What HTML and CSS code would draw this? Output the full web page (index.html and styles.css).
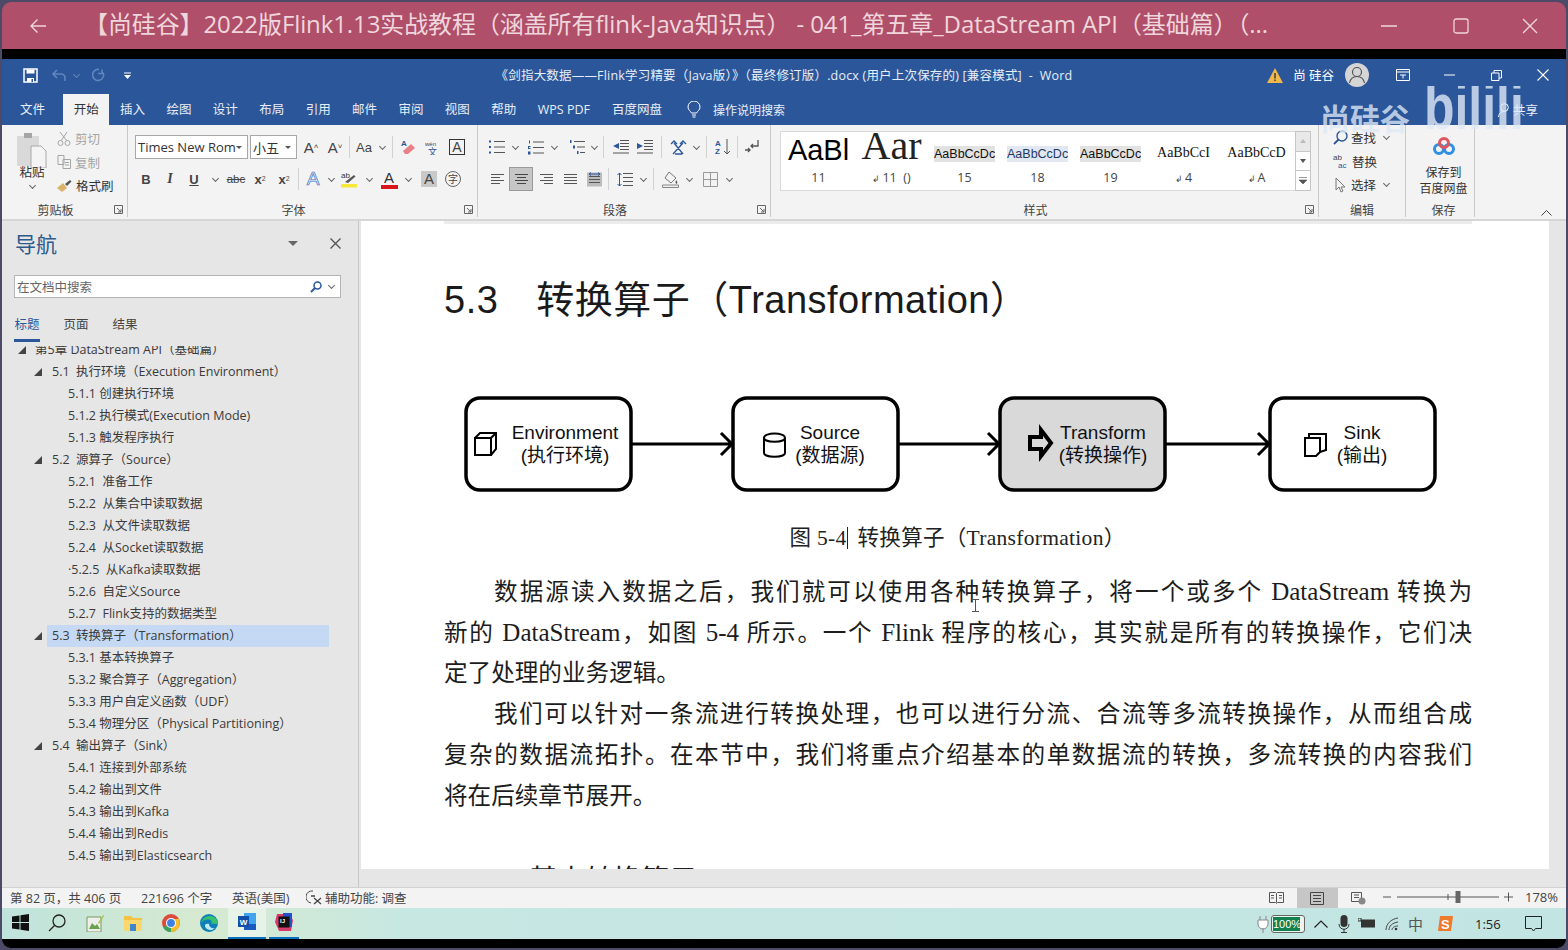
FILE: index.html
```html
<!DOCTYPE html>
<html lang="zh-CN">

<head>
    <meta charset="UTF-8">
    <title>Word - Flink</title>
    <link rel="stylesheet" href="styles.css">
</head>

<body>
    <svg class="defs" width="0" height="0">
        <symbol id="launcher" viewBox="0 0 9 9"><path d="M.5.5h8v8h-8zM3 3l4 4M7 4v3H4" fill="none" stroke="#666"/></symbol>
    </svg>

    <div class="window">
        <!-- video player title -->
        <div class="player-bar">
            <svg class="back" width="18" height="16" viewBox="0 0 18 16"><path d="M17 8H2M8.500 1.500 2 8l6.500 6.500" fill="none" stroke="#efd6dc" stroke-width="1.400"/></svg>
            <div class="player-title">【尚硅谷】2022版Flink1.13实战教程（涵盖所有flink-Java知识点） - 041_第五章_DataStream API（基础篇）（...</div>
            <svg class="player-btn" width="16" height="16" viewBox="0 0 16 16"><path d="M0 8h16" stroke="#efd6dc" stroke-width="1.300"/></svg>
            <svg class="player-btn" width="16" height="16" viewBox="0 0 16 16"><rect x="1" y="1" width="14" height="14" rx="2" fill="none" stroke="#efd6dc" stroke-width="1.300"/></svg>
            <svg class="player-btn player-close" width="16" height="16" viewBox="0 0 16 16"><path d="M1 1l14 14M15 1 1 15" stroke="#efd6dc" stroke-width="1.300"/></svg>
        </div>
        <div class="black-strip"></div>

        <!-- word title -->
        <div class="word-bar">
            <div class="qat">
                <svg class="qat-save" width="15" height="15" viewBox="0 0 15 15"><path d="M1 1h13v13H1z" fill="none" stroke="#fff" stroke-width="1.500"/><path d="M3.500 1.500h8v4h-8zM4 10h7v4H4z" fill="#fff"/><path d="M8.500 11h1.500v3H8.500z" fill="#2b579a"/></svg>
                <svg class="qat-undo" width="15" height="13" viewBox="0 0 15 13"><path d="M5 1 1 5l4 4M1 5h8a4 4 0 0 1 4 4v3" fill="none" stroke="#5f86bd" stroke-width="1.600"/></svg>
                <span class="chev chev-dim"></span>
                <svg class="qat-redo" width="14" height="14" viewBox="0 0 14 14"><path d="M10 1.500v4h-4M11 4.500A5.500 5.500 0 1 1 7 1.500" fill="none" stroke="#5f86bd" stroke-width="1.600"/></svg>
                <svg class="qat-more" width="7" height="7" viewBox="0 0 7 7"><path d="M0 3h7L3.500 7z" fill="#fff"/><path d="M0 1h7" stroke="#fff"/></svg>
            </div>
            <div class="doc-title">《剑指大数据——Flink学习精要（Java版）》（最终修订版）.docx (用户上次保存的) [兼容模式]  -  Word</div>
            <div class="word-right">
                <svg width="16" height="15" viewBox="0 0 16 15"><path d="M8 0l8 15H0z" fill="#f2b84b"/><path d="M7.300 5h1.400v5.500H7.300zM7.300 11.500h1.400V13H7.300z" fill="#333"/></svg>
                <span class="user-name">尚 硅谷</span>
                <svg class="avatar" width="24" height="24" viewBox="0 0 24 24"><circle cx="12" cy="12" r="12" fill="#d5d5d5"/><circle cx="12" cy="9" r="4.500" fill="none" stroke="#555" stroke-width="1.200"/><path d="M4.500 20c1-5 4-6.500 7.500-6.500s6.500 1.500 7.500 6.500" fill="none" stroke="#555" stroke-width="1.200"/></svg>
                <span class="win-btn"><svg width="14" height="12" viewBox="0 0 14 12"><path d="M.5.500h13v11H.500zM.5 3h13M4 6h6M7 6v3.500" fill="none" stroke="#fff"/></svg></span>
                <span class="win-btn"><svg width="11" height="2" viewBox="0 0 11 2"><path d="M0 1h11" stroke="#fff"/></svg></span>
                <span class="win-btn"><svg width="11" height="11" viewBox="0 0 11 11"><path d="M.5 3h7.500v7.500H.5zM3 3V.5h7.500V8H8" fill="none" stroke="#fff"/></svg></span>
                <span class="win-btn"><svg width="12" height="12" viewBox="0 0 12 12"><path d="M.5.500l11 11M11.500.500l-11 11" stroke="#fff" stroke-width="1.100"/></svg></span>
            </div>
        </div>
        <div class="tab-bar">
            <span class="tab tab-file">文件</span>
            <span class="tab tab-on">开始</span>
            <span class="tab">插入</span>
            <span class="tab">绘图</span>
            <span class="tab">设计</span>
            <span class="tab">布局</span>
            <span class="tab">引用</span>
            <span class="tab">邮件</span>
            <span class="tab">审阅</span>
            <span class="tab">视图</span>
            <span class="tab">帮助</span>
            <span class="tab tab-wps">WPS PDF</span>
            <span class="tab tab-pan">百度网盘</span>
            <span class="tell-me">
                <svg width="14" height="17" viewBox="0 0 14 17"><path d="M4.500 12C3.500 10 1 9 1 6a6 6 0 0 1 12 0c0 3-2.500 4-3.500 6zM5 14h4M5.500 16h3" fill="none" stroke="#fff"/></svg>
                <span>操作说明搜索</span>
            </span>
            <span class="tab-share">
                <svg width="13" height="14" viewBox="0 0 13 14"><circle cx="6.500" cy="4.500" r="3.800" fill="none" stroke="#fff"/><path d="M.5 14c.5-4 3-5.500 6-5.500" fill="none" stroke="#fff"/></svg>
                <span>共享</span>
            </span>
        </div>

        <!-- ribbon -->
        <div class="ribbon">
            <div class="group group-clip">
                <div class="group-body clip-body">
                    <div class="paste">
                        <svg width="30" height="36" viewBox="0 0 30 36"><path d="M0 4h22v30H0z" fill="#d9d9d9"/><path d="M7 1h8v5H7z" fill="#a5a5a5"/><path d="M14 14h10l5 5v17H14z" fill="#f4f4f4" stroke="#a8a8a8"/></svg>
                        <span class="paste-label">粘贴</span>
                        <span class="chev"></span>
                    </div>
                    <div class="clip-list">
                        <div class="clip-item clip-off"><svg width="14" height="14" viewBox="0 0 14 14"><path d="M10 0 4 9M3 0l7 9" stroke="#a5a5a5" fill="none"/><circle cx="3.500" cy="11" r="2.500" fill="none" stroke="#a5a5a5"/><circle cx="10.500" cy="11" r="2.500" fill="none" stroke="#a5a5a5"/></svg>剪切</div>
                        <div class="clip-item clip-off"><svg width="14" height="14" viewBox="0 0 14 14"><path d="M1 .5h6v9H1zM6 4.500h7.500v9H6zM8 7.500h4M8 10h4" fill="#f3f3f3" stroke="#a5a5a5"/></svg>复制</div>
                        <div class="clip-item"><svg width="15" height="14" viewBox="0 0 15 14"><path d="M0 9l6-5 4 5-5 4z" fill="#d9b36a"/><path d="M8 5l5-4 1.500 1.500L10 7z" fill="#555"/></svg>格式刷</div>
                    </div>
                </div>
                <div class="group-label"><span>剪贴板</span><svg class="launch"><use href="#launcher"/></svg></div>
            </div>

            <div class="group group-font">
                <div class="group-body">
                    <div class="row font-row-1">
                        <span class="select select-font">Times New Rom<i class="caret"></i></span>
                        <span class="select select-size">小五<i class="caret"></i></span>
                        <span class="tool txt grow-a">A<sup>˄</sup></span>
                        <span class="tool txt grow-a">A<sup>˅</sup></span>
                        <span class="sep sep-tight"></span>
                        <span class="tool txt small-aa">Aa</span><span class="chev w12"></span>
                        <span class="sep"></span>
                        <span class="tool"><svg width="16" height="16" viewBox="0 0 16 16"><path d="M4 15l-2-3 8-7 4 4-7 6z" fill="#e8808c"/><text x="0" y="7" class="svg-a">A</text></svg></span>
                        <span class="tool"><svg width="16" height="16" viewBox="0 0 16 16"><text x="0" y="7" class="svg-tiny">wén</text><text x="3" y="16" class="svg-cn">文</text></svg></span>
                        <span class="tool"><span class="boxed-a">A</span></span>
                    </div>
                    <div class="row font-row-2">
                        <span class="tool txt t-b">B</span>
                        <span class="tool txt t-i">I</span>
                        <span class="tool txt t-u">U</span><span class="chev w18"></span>
                        <span class="tool txt t-s">abc</span>
                        <span class="tool txt t-sm">x<sub>2</sub></span>
                        <span class="tool txt t-sm">x<sup>2</sup></span>
                        <span class="sep sep-tight"></span>
                        <span class="tool txt t-fx">A</span><span class="chev w12"></span>
                        <span class="tool"><svg width="18" height="18" viewBox="0 0 18 18"><text x="1" y="8" class="svg-ab">ab</text><path d="M5 12 14 5l1.500 1.500L8 13z" fill="#555"/><path d="M1 14h16v3.500H1z" fill="#f7e83a"/></svg></span><span class="chev w16"></span>
                        <span class="tool"><span class="a-red">A</span></span><span class="chev w14"></span>
                        <span class="tool ml2"><span class="a-shade">A</span></span>
                        <span class="tool"><span class="a-circle">字</span></span>
                    </div>
                </div>
                <div class="group-label"><span>字体</span><svg class="launch"><use href="#launcher"/></svg></div>
            </div>

            <div class="group group-para">
                <div class="group-body">
                    <div class="row para-row">
                        <span class="tool"><svg width="16" height="14" viewBox="0 0 16 14"><path d="M5 1.500h11M5 7h11M5 12.500h11" stroke="#555"/><path d="M0 .5h2v2H0zM0 6h2v2H0zM0 11.500h2v2H0z" fill="#2b579a"/></svg></span><span class="chev w12"></span>
                        <span class="tool ml3"><svg width="16" height="15" viewBox="0 0 16 15"><path d="M5 2h11M5 7.500h11M5 13h11" stroke="#555"/><path d="M1 .5h1v3H1zM0 6h2.500v1H1v1h1.500v1H0zM0 11.500h2.500v3H0z" fill="#2b579a"/></svg></span><span class="chev w12"></span>
                        <span class="tool ml5"><svg width="16" height="15" viewBox="0 0 16 15"><path d="M5 1.500h11M8 7h8M11 12.500h5" stroke="#555"/><path d="M1 0h1.500v3H1zM4 5.500h2v3H4zM8 11h1.500v3H8z" fill="#2b579a"/></svg></span><span class="chev w10"></span>
                        <span class="sep"></span>
                        <span class="tool ml1"><svg width="16" height="14" viewBox="0 0 16 14"><path d="M7 .5h9M7 3.500h9M7 6.500h9M7 9.500h9M0 13h16" stroke="#555"/><path d="M6 3v6L0 6z" fill="#2b579a"/></svg></span>
                        <span class="tool"><svg width="16" height="14" viewBox="0 0 16 14"><path d="M7 .5h9M7 3.500h9M7 6.500h9M7 9.500h9M0 13h16" stroke="#555"/><path d="M0 3v6L6 6z" fill="#2b579a"/></svg></span>
                        <span class="sep"></span>
                        <span class="tool"><svg width="17" height="15" viewBox="0 0 17 15"><path d="M1 4 4 1l3 3M10 4l3-3 3 3M3 14 13 3M4 3l9 11M5 14h7" fill="none" stroke="#2b579a" stroke-width="1.300"/></svg></span><span class="chev w12"></span>
                        <span class="sep"></span>
                        <span class="tool"><svg width="16" height="16" viewBox="0 0 16 16"><text x="0" y="7" class="svg-az">A</text><text x="0" y="15" class="svg-az">Z</text><path d="M12 0v15M9 12l3 3 3-3" fill="none" stroke="#555"/></svg></span>
                        <span class="sep sep-tight"></span>
                        <span class="tool"><svg width="16" height="15" viewBox="0 0 16 15"><path d="M14 0v6H7M9 4 7 6l2 2M1 10h5M4 8l2 2-2 2" fill="none" stroke="#555" stroke-width="1.300"/></svg></span>
                    </div>
                    <div class="row para-row">
                        <span class="tool"><svg width="13" height="11" viewBox="0 0 13 11"><path d="M0 .5h13M0 3.500h9M0 6.500h13M0 9.500h9" stroke="#555"/></svg></span>
                        <span class="tool tool-on"><svg width="13" height="11" viewBox="0 0 13 11"><path d="M0 .5h13M2 3.500h9M0 6.500h13M2 9.500h9" stroke="#444"/></svg></span>
                        <span class="tool ml1"><svg width="13" height="11" viewBox="0 0 13 11"><path d="M0 .5h13M4 3.500h9M0 6.500h13M4 9.500h9" stroke="#555"/></svg></span>
                        <span class="tool"><svg width="13" height="11" viewBox="0 0 13 11"><path d="M0 .5h13M0 3.500h13M0 6.500h13M0 9.500h13" stroke="#555"/></svg></span>
                        <span class="tool"><svg width="15" height="15" viewBox="0 0 15 15"><path d="M0 .5h15v14H0z" fill="#bbb"/><path d="M2 4.500h11M2 7.500h11M2 10.500h11" stroke="#555"/><path d="M2 2h11M4 .5 2 2l2 1.500M11 .5 13 2l-2 1.500" fill="none" stroke="#2b579a"/></svg></span>
                        <span class="sep sep-tight"></span>
                        <span class="tool ml2"><svg width="16" height="15" viewBox="0 0 16 15"><path d="M6 1.500h10M6 5.500h10M6 9.500h10M6 13.500h10" stroke="#555"/><path d="M2.500 1v13M.5 3l2-2 2 2M.5 12l2 2 2-2" fill="none" stroke="#2b579a"/></svg></span><span class="chev w12"></span>
                        <span class="sep"></span>
                        <span class="tool"><svg width="17" height="17" viewBox="0 0 17 17"><path d="M7 1l7 6-5 5-6-5z" fill="#f3f3f3" stroke="#777"/><path d="M14 9c1 1.500 2 2.500 1 3.500s-2-1-1-3.500z" fill="#555"/><path d="M.5 14h16v2.500H.5z" fill="#eee" stroke="#888"/></svg></span><span class="chev w14"></span>
                        <span class="tool ml2"><svg width="15" height="15" viewBox="0 0 15 15"><path d="M.5.500h14v14H.500zM7.500.5v14M.5 7.500h14" fill="none" stroke="#999"/></svg></span><span class="chev w14"></span>
                    </div>
                </div>
                <div class="group-label"><span>段落</span><svg class="launch"><use href="#launcher"/></svg></div>
            </div>

            <div class="group group-styles">
                <div class="group-body gallery-wrap">
                    <div class="gallery">
                        <div class="style-item"><div class="preview p-big">AaBl</div><div class="style-name">11</div></div>
                        <div class="style-item"><div class="preview p-big-serif">Aar</div><div class="style-name"><i class="ret">↲</i>11&nbsp; ()</div></div>
                        <div class="style-item"><div class="preview"><span class="p-chip">AaBbCcDc</span></div><div class="style-name">15</div></div>
                        <div class="style-item"><div class="preview"><span class="p-chip p-chip-blue">AaBbCcDc</span></div><div class="style-name">18</div></div>
                        <div class="style-item"><div class="preview"><span class="p-chip">AaBbCcDc</span></div><div class="style-name">19</div></div>
                        <div class="style-item"><div class="preview"><span class="p-serif">AaBbCcI</span></div><div class="style-name"><i class="ret">↲</i>4</div></div>
                        <div class="style-item"><div class="preview"><span class="p-serif">AaBbCcD</span></div><div class="style-name"><i class="ret">↲</i>A</div></div>
                    </div>
                    <div class="scroller">
                        <span class="scroll-cell scroll-off"><svg width="6" height="4" viewBox="0 0 6 4"><path d="M0 4l3-4 3 4z" fill="#bbb"/></svg></span>
                        <span class="scroll-cell"><svg width="6" height="4" viewBox="0 0 6 4"><path d="M0 0l3 4 3-4z" fill="#555"/></svg></span>
                        <span class="scroll-cell"><svg width="8" height="7" viewBox="0 0 8 7"><path d="M0 .5h8M0 3l4 4 4-4z" fill="#555" stroke="#555" stroke-width=".6"/></svg></span>
                    </div>
                </div>
                <div class="group-label"><span>样式</span><svg class="launch"><use href="#launcher"/></svg></div>
            </div>

            <div class="group group-edit">
                <div class="group-body edit-list">
                    <div class="edit-item"><svg width="15" height="15" viewBox="0 0 15 15"><circle cx="9" cy="6" r="5" fill="none" stroke="#2b579a" stroke-width="1.400"/><path d="M5.500 9.500 1 14" stroke="#2b579a" stroke-width="1.800"/></svg><span>查找</span><span class="chev w12"></span></div>
                    <div class="edit-item"><svg width="16" height="15" viewBox="0 0 16 15"><text x="0" y="6" class="svg-abc">ab</text><text x="5" y="14" class="svg-abc svg-abc-blue">ac</text></svg><span>替换</span></div>
                    <div class="edit-item"><svg width="15" height="16" viewBox="0 0 15 16"><path d="M3 1v12l3-3 2 5 2-1-2-4h4z" fill="#f3f3f3" stroke="#777"/></svg><span>选择</span><span class="chev w12"></span></div>
                </div>
                <div class="group-label group-label-center"><span>编辑</span></div>
            </div>

            <div class="group group-save">
                <div class="group-body save-body">
                    <svg width="22" height="19" viewBox="0 0 22 19"><circle cx="6" cy="12" r="4.500" fill="none" stroke="#2f8fe0" stroke-width="3"/><circle cx="16" cy="12" r="4.500" fill="none" stroke="#2f8fe0" stroke-width="3"/><circle cx="11" cy="6" r="4.500" fill="none" stroke="#e0565f" stroke-width="3"/></svg>
                    <span class="save-text">保存到<br>百度网盘</span>
                </div>
                <div class="group-label group-label-center"><span>保存</span></div>
            </div>

            <div class="collapse-cell">
                <svg width="11" height="6" viewBox="0 0 11 6"><path d="M.5 5.500l5-5 5 5" fill="none" stroke="#444"/></svg>
            </div>
        </div>
        <div class="ribbon-line"></div>

        <!-- uploader watermark, sits over the tabs -->
        <div class="watermark"><span class="wm-cn">尚硅谷</span><span class="wm-logo">bilili</span></div>

        <div class="main">
            <aside class="nav">
                <div class="nav-head">
                    <span class="nav-title">导航</span>
                    <span class="nav-drop"></span>
                    <svg width="11" height="11" viewBox="0 0 11 11"><path d="M.5.500l10 10M10.500.500l-10 10" stroke="#555" stroke-width="1.400"/></svg>
                </div>
                <div class="nav-search">
                    <span class="nav-search-text">在文档中搜索</span>
                    <svg width="12" height="12" viewBox="0 0 12 12"><circle cx="7.500" cy="4.500" r="3.500" fill="none" stroke="#2b579a" stroke-width="1.500"/><path d="M5 7 1 11" stroke="#2b579a" stroke-width="2"/></svg>
                    <span class="chev w18"></span>
                </div>
                <div class="nav-tabs">
                    <span class="nav-tab nav-tab-on">标题</span>
                    <span class="nav-tab">页面</span>
                    <span class="nav-tab">结果</span>
                </div>
                <div class="tree">
                    <div class="node lv1"><i class="tri"></i><span>第5章 DataStream API（基础篇）</span></div>
                    <div class="node lv2"><i class="tri"></i><span>5.1&nbsp; 执行环境（Execution Environment）</span></div>
                    <div class="node lv3"><span>5.1.1 创建执行环境</span></div>
                    <div class="node lv3"><span>5.1.2 执行模式(Execution Mode)</span></div>
                    <div class="node lv3"><span>5.1.3 触发程序执行</span></div>
                    <div class="node lv2"><i class="tri"></i><span>5.2&nbsp; 源算子（Source）</span></div>
                    <div class="node lv3"><span>5.2.1&nbsp; 准备工作</span></div>
                    <div class="node lv3"><span>5.2.2&nbsp; 从集合中读取数据</span></div>
                    <div class="node lv3"><span>5.2.3&nbsp; 从文件读取数据</span></div>
                    <div class="node lv3"><span>5.2.4&nbsp; 从Socket读取数据</span></div>
                    <div class="node lv3"><span>·5.2.5&nbsp; 从Kafka读取数据</span></div>
                    <div class="node lv3"><span>5.2.6&nbsp; 自定义Source</span></div>
                    <div class="node lv3"><span>5.2.7&nbsp; Flink支持的数据类型</span></div>
                    <div class="node lv2 node-on"><i class="tri"></i><span>5.3&nbsp; 转换算子（Transformation）</span></div>
                    <div class="node lv3"><span>5.3.1 基本转换算子</span></div>
                    <div class="node lv3"><span>5.3.2 聚合算子（Aggregation）</span></div>
                    <div class="node lv3"><span>5.3.3 用户自定义函数（UDF）</span></div>
                    <div class="node lv3"><span>5.3.4 物理分区（Physical Partitioning）</span></div>
                    <div class="node lv2"><i class="tri"></i><span>5.4&nbsp; 输出算子（Sink）</span></div>
                    <div class="node lv3"><span>5.4.1 连接到外部系统</span></div>
                    <div class="node lv3"><span>5.4.2 输出到文件</span></div>
                    <div class="node lv3"><span>5.4.3 输出到Kafka</span></div>
                    <div class="node lv3"><span>5.4.4 输出到Redis</span></div>
                    <div class="node lv3"><span>5.4.5 输出到Elasticsearch</span></div>
                </div>
            </aside>

            <main class="doc">
                <div class="page">
                    <div class="page-top"></div>
                    <h1 class="h-section">5.3<span class="h-gap"></span>转换算子（Transformation）</h1>
                    <svg class="diagram" width="1000" height="130" viewBox="450 380 1000 130">
                        <g class="flow-box">
                            <rect x="467" y="398" width="165" height="92" rx="14"/>
                            <rect x="734" y="398" width="165" height="92" rx="14"/>
                            <rect class="flow-on" x="1001" y="398" width="165" height="92" rx="14"/>
                            <rect x="1271" y="398" width="165" height="92" rx="14"/>
                        </g>
                        <g class="flow-line">
                            <path d="M633 444h98M722 433l11 11-11 11"/>
                            <path d="M900 444h98M989 433l11 11-11 11"/>
                            <path d="M1167 444h101M1259 433l11 11-11 11"/>
                        </g>
                        <g class="flow-icon">
                            <path d="M476 438h16v17h-16zM476 438l5-5h16v16l-5 6M492 438l5-5"/>
                            <path d="M765 438c0-6 21-6 21 0v15c0 5-21 5-21 0zM765 438c0 5 21 5 21 0"/>
                            <path class="flow-thick" d="M1031 437h11v-7l10 13-10 13v-7h-11z"/>
                            <path d="M1306 438h15v14l-4 4h-11zM1310 438v-4h17v16l-6 2"/>
                        </g>
                        <text class="flow-text" x="566" y="439">Environment</text>
                        <text class="flow-text" x="566" y="462">(执行环境)</text>
                        <text class="flow-text" x="831" y="439">Source</text>
                        <text class="flow-text" x="831" y="462">(数据源)</text>
                        <text class="flow-text" x="1104" y="439">Transform</text>
                        <text class="flow-text" x="1104" y="462">(转换操作)</text>
                        <text class="flow-text" x="1363" y="439">Sink</text>
                        <text class="flow-text" x="1363" y="462">(输出)</text>
                    </svg>
                    <p class="caption">图 5-4<span class="text-caret"></span>转换算子（Transformation）</p>
                    <div class="body-text">
                        <span class="line line-just line-first">数据源读入数据之后，我们就可以使用各种转换算子，将一个或多个 <span class="lat">DataStream</span> 转换为</span>
                        <span class="line line-just">新的 <span class="lat">DataStream</span>，如图 <span class="lat">5-4</span> 所示。一个 <span class="lat">Flink</span> 程序的核心，其实就是所有的转换操作，它们决</span>
                        <span class="line">定了处理的业务逻辑。</span>
                        <span class="line line-just line-first">我们可以针对一条流进行转换处理，也可以进行分流、合流等多流转换操作，从而组合成</span>
                        <span class="line line-just">复杂的数据流拓扑。在本节中，我们将重点介绍基本的单数据流的转换，多流转换的内容我们</span>
                        <span class="line">将在后续章节展开。</span>
                    </div>
                    <h2 class="h-sub">5.3.1<span class="h-gap-sub"></span>基本转换算子</h2>
                    <svg class="ibeam" width="7" height="13" viewBox="0 0 7 13"><path d="M0 .5h7M0 12.500h7M3.500.5v12" stroke="#555"/></svg>
                </div>
            </main>
        </div>

        <!-- status bar -->
        <div class="status">
            <span class="st-a">第 82 页，共 406 页</span>
            <span class="st-b">221696 个字</span>
            <span class="st-c">英语(美国)</span>
            <span class="st-d"><svg width="16" height="15" viewBox="0 0 16 15"><path d="M7 1A6 6 0 0 0 5 13" fill="none" stroke="#444"/><path d="M5 6h4M8 8l7 6M15 8l-7 6" stroke="#444" stroke-width="1.300"/></svg>辅助功能: 调查</span>
            <span class="st-views">
                <span class="view"><svg width="15" height="12" viewBox="0 0 15 12"><path d="M.5.500h6l1 1 1-1h6v10h-6l-1 1-1-1h-6zM7.500 1.500v9M2 3.500h3M2 6h3M10 3.500h3M10 6h3" fill="none" stroke="#555"/></svg></span>
                <span class="view view-on"><svg width="14" height="13" viewBox="0 0 14 13"><path d="M.5.500h13v12H.5zM3 3.500h8M3 6.500h8M3 9.500h8" fill="none" stroke="#444"/></svg></span>
                <span class="view"><svg width="15" height="13" viewBox="0 0 15 13"><path d="M.5.500h10v9H.5zM3 3h5M3 5.500h5" fill="none" stroke="#555"/><circle cx="11" cy="9" r="3.500" fill="#888"/></svg></span>
            </span>
            <svg class="zoom-bar" width="135" height="14" viewBox="0 0 135 14"><path d="M0 7h8M14 7h102M65 4v6M121 7h9M125.500 2.500v9" stroke="#555"/><path d="M72.500 1h5v12h-5z" fill="#666"/></svg>
            <span class="st-zoom">178%</span>
        </div>

        <!-- taskbar -->
        <div class="taskbar">
            <span class="task"><svg width="17" height="17" viewBox="0 0 17 17"><path d="M0 2.500 7.500 1.500v6.500H0zM8.500 1.300 17 0v8H8.500zM0 9h7.500v6.500L0 14.500zM8.500 9H17v8L8.500 15.700z" fill="#111"/></svg></span>
            <span class="task"><svg width="18" height="18" viewBox="0 0 18 18"><circle cx="11" cy="7" r="6" fill="none" stroke="#222" stroke-width="1.300"/><path d="M6.500 11.500 1 17" stroke="#222" stroke-width="1.300"/></svg></span>
            <span class="task"><svg width="18" height="18" viewBox="0 0 18 18"><path d="M1 3h14v15H1z" fill="#eee" stroke="#7a9a5a"/><path d="M3 15l3-6 3 3 2-2 3 5z" fill="#6ca34a"/><path d="M12 9l5-8 1 1-5 8z" fill="#a5c24a"/></svg></span>
            <span class="task"><svg width="18" height="16" viewBox="0 0 18 16"><path d="M0 1h7l2 2h9v3H0z" fill="#f5c242"/><path d="M0 5h18v11H0z" fill="#fbd76e"/><path d="M6 9h6v7H6z" fill="#3f87c9"/></svg></span>
            <span class="task"><svg width="18" height="18" viewBox="0 0 18 18"><circle cx="9" cy="9" r="9" fill="#dd4b3e"/><path d="M9 9 1.200 13.500A9 9 0 0 0 9 18c2 0 4-.7 5.500-2z" fill="#3da35a"/><path d="M9 5h7.900A9 9 0 0 1 9 18z" fill="#f6c02d"/><circle cx="9" cy="9" r="4.500" fill="#3f80e5" stroke="#fff" stroke-width="1.200"/></svg></span>
            <span class="task"><svg width="18" height="18" viewBox="0 0 18 18"><circle cx="9" cy="9" r="9" fill="#0f7fb8"/><path d="M18 10c0-5-4-8-8-8-5 0-8 3-9 7 2-3 5-4 8-3.500 3 .5 3 3 2 4l7 .5z" fill="#37c06f"/><path d="M9 10c0 3 3 5 6 4-2 2-5 3-8 1s-3-6 2-5z" fill="#bfe9f5"/></svg></span>
            <span class="task task-on"><svg width="18" height="17" viewBox="0 0 18 17"><path d="M6 0h12v17H6z" fill="#41a5ee"/><path d="M6 11h12v6H6z" fill="#185abd"/><path d="M0 3h11v11H0z" fill="#114fa8"/><text x="5.500" y="12" class="svg-w">W</text></svg></span>
            <span class="task task-run"><svg width="18" height="18" viewBox="0 0 18 18"><path d="M2 1h12l4 6-2 11H4L0 9z" fill="#d83a6b"/><path d="M8 0h9v14H8z" fill="#2450c8"/><path d="M3.500 3.500h11v11h-11z" fill="#111"/><text x="5" y="10" class="svg-ij">IJ</text></svg></span>
            <span class="tray">
                <svg width="12" height="18" viewBox="0 0 12 18"><path d="M1 5h10v4a5 5 0 0 1-10 0zM3 1v4M9 1v4M6 13v5" fill="#fff" stroke="#888"/></svg>
                <span class="battery"><span class="battery-fill">100%</span></span>
                <svg class="tray-caret" width="14" height="8" viewBox="0 0 14 8"><path d="M.5 7.500 7 1l6.500 6.500" fill="none" stroke="#222" stroke-width="1.200"/></svg>
                <svg class="tray-mic" width="12" height="18" viewBox="0 0 12 18"><rect x="2.500" width="7" height="12" rx="3.500" fill="#333"/><path d="M1 9c0 7 10 7 10 0M6 14v3M3 17.500h6" fill="none" stroke="#333"/></svg>
                <svg class="tray-bat" width="17" height="11" viewBox="0 0 17 11"><path d="M3 1.500h14v8H3z" fill="#333"/><path d="M0 0h3v3H0z" fill="none" stroke="#333"/></svg>
                <svg class="tray-wifi" width="14" height="14" viewBox="0 0 14 14"><path d="M1 13C1 7 6 2 13 1M4 13c0-4 3-7 9-8M7 13c0-2 2-4 6-4" fill="none" stroke="#444"/><circle cx="11" cy="12" r="1.300" fill="#333"/></svg>
                <span class="tray-ime">中</span>
                <svg class="tray-sogou" width="17" height="17" viewBox="0 0 17 17"><path d="M3 1h13l-2 15H1z" fill="#ee7a2e"/><text x="4" y="13.500" class="svg-s">S</text></svg>
                <span class="tray-clock">1:56</span>
                <svg class="tray-note" width="17" height="16" viewBox="0 0 17 16"><path d="M.5.500h16v12h-6L8.500 15l-2-2.500h-6z" fill="none" stroke="#222"/></svg>
            </span>
        </div>
        <div class="black-foot"></div>
    </div>
</body>

</html>
```

FILE: styles.css
```css
* {
    box-sizing: border-box;
}

html,
body {
    margin: 0;
    height: 950px;
    overflow: hidden;
}

body {
    background: #4c4a66;
    padding: 2px 2px 2px 2px;
    font-family: "Open Sans", "Noto Sans CJK SC", sans-serif;
    font-size: 12.5px;
    color: #333;
}

.defs {
    display: block;
    height: 0;
}

.window {
    position: relative;
    width: 1564px;
    height: 946px;
    border-radius: 9px;
    overflow: hidden;
    display: flex;
    flex-direction: column;
}

/* player bar */
.player-bar {
    height: 47px;
    background: #b04f69;
    color: #efd6dc;
    display: flex;
    align-items: center;
    flex: none;
}

.back {
    margin-left: 27px;
}

.player-title {
    font-size: 24px;
    line-height: 30px;
    margin: -4px 0 0 37px;
    width: 1241px;
    white-space: nowrap;
    letter-spacing: -0.1px;
}

.player-btn {
    margin-left: 56px;
}

.player-close {
    margin-left: 53px;
}

.black-strip {
    height: 10px;
    background: #000;
    flex: none;
}

/* word title */
.word-bar {
    height: 32px;
    background: #2b579a;
    display: grid;
    grid-template-columns: 1fr auto 1fr;
    align-items: center;
    color: #fff;
    flex: none;
}

.qat {
    display: flex;
    align-items: center;
}

.qat-save {
    margin-left: 21px;
}

.qat-undo {
    margin-left: 14px;
}

.qat-redo {
    margin-left: 13px;
}

.qat-more {
    margin-left: 18px;
}

.doc-title {
    margin-top: -2px;
    font-size: 12.5px;
    letter-spacing: 0.19px;
    white-space: pre;
    color: #e8eef7;
}

.word-right {
    display: flex;
    align-items: center;
    justify-content: flex-end;
}

.user-name {
    margin: -2px 0 0 10px;
    font-size: 12.5px;
}

.avatar {
    margin-left: 11px;
    margin-right: 11px;
}

.win-btn {
    width: 46.5px;
    display: flex;
    justify-content: center;
}

/* tabs */
.tab-bar {
    height: 34px;
    background: #2b579a;
    display: flex;
    align-items: flex-end;
    color: #e8eef7;
    flex: none;
}

.tab {
    width: 46.4px;
    height: 31px;
    line-height: 31px;
    text-align: center;
    flex: none;
}

.tab-file {
    width: 61px;
}

.tab-on {
    background: #f3f3f3;
    color: #333;
}

.tab-wps {
    width: 74px;
}

.tab-pan {
    width: 72px;
}

.tell-me {
    height: 31px;
    margin-left: 14px;
    display: flex;
    align-items: center;
    gap: 12px;
    font-size: 12px;
}

.tab-share {
    height: 31px;
    margin-left: auto;
    margin-right: 28px;
    display: flex;
    align-items: center;
    gap: 2px;
}

/* ribbon */
.ribbon {
    height: 94px;
    background: #f3f3f3;
    display: flex;
    flex: none;
}

.ribbon-line {
    height: 2px;
    background: #d6d6d6;
    flex: none;
}

.group {
    display: flex;
    flex-direction: column;
    border-right: 1px solid #c9c9c9;
    flex: none;
    margin-bottom: 2px;
}

.group-clip {
    width: 126px;
}

.group-font {
    width: 350px;
}

.group-para {
    width: 293px;
}

.group-styles {
    width: 548px;
}

.group-edit {
    width: 87px;
}

.group-save {
    width: 69px;
    padding-left: 7px;
}

.group-body {
    height: 76px;
    padding-top: 10px;
    flex: none;
}

.group-label {
    height: 15px;
    margin-top: 1px;
    display: flex;
    align-items: center;
    font-size: 12px;
    color: #444;
}

.group-label span {
    flex: 1;
    text-align: center;
}

.launch {
    width: 9px;
    height: 9px;
    margin: 0 4px 0 5px;
}

.row {
    height: 24px;
    display: flex;
    align-items: center;
}

.row + .row {
    margin-top: 8px;
}

.font-row-1 {
    padding-left: 7px;
}

.font-row-2 {
    padding-left: 6px;
}

.para-row {
    padding-left: 7px;
}

.tool {
    width: 24px;
    height: 22px;
    flex: none;
    display: flex;
    align-items: center;
    justify-content: center;
    color: #444;
}

.tool-on {
    background: #c6c6c6;
    border: 1px solid #9a9a9a;
    height: 24px;
}

.ml1 {
    margin-left: 1px;
}

.ml2 {
    margin-left: 2px;
}

.ml3 {
    margin-left: 3px;
}

.ml5 {
    margin-left: 5px;
}

.sep {
    width: 1px;
    height: 22px;
    margin: 0 4px;
    background: #d2d2d2;
    flex: none;
}

.sep-tight {
    margin: 0 2px;
}

.chev {
    display: inline-flex;
    align-items: center;
    justify-content: center;
    flex: none;
    height: 12px;
}

.chev::after {
    content: "";
    width: 4px;
    height: 4px;
    border-right: 1px solid #666;
    border-bottom: 1px solid #666;
    transform: translateY(-1px) rotate(45deg);
}

.chev-dim {
    margin-left: 7px;
}

.chev-dim::after {
    border-color: #5f86bd;
}

.w10 {
    width: 10px;
}

.w12 {
    width: 12px;
}

.w14 {
    width: 14px;
}

.w16 {
    width: 16px;
}

.w18 {
    width: 18px;
}

.select {
    height: 24px;
    background: #fff;
    border: 1px solid #a8a8a8;
    display: flex;
    align-items: center;
    padding-left: 2px;
    font-size: 13px;
    color: #333;
    white-space: nowrap;
    flex: none;
}

.select-font {
    width: 113px;
}

.select-size {
    width: 47px;
    margin: 0 2px;
}

.caret {
    margin-left: auto;
    margin-right: 5px;
    border-left: 3px solid transparent;
    border-right: 3px solid transparent;
    border-top: 3px solid #555;
}

.txt {
    font-family: "Liberation Sans", sans-serif;
}

.grow-a {
    font-size: 15px;
}

.grow-a sup {
    font-size: 8px;
    line-height: 0;
    color: #444;
}

.small-aa {
    font-size: 13px;
}

.boxed-a {
    width: 16px;
    height: 16px;
    border: 1px solid #333;
    font: 14px/14px "Liberation Sans", sans-serif;
    text-align: center;
}

.t-b {
    font-size: 13px;
    font-weight: bold;
}

.t-i {
    font-family: "Liberation Serif", serif;
    font-size: 14px;
    font-style: italic;
    font-weight: bold;
}

.t-u {
    font-size: 13px;
    font-weight: bold;
    text-decoration: underline;
}

.t-s {
    font-size: 11.5px;
    text-decoration: line-through;
}

.t-sm {
    font-size: 13px;
    font-weight: bold;
}

.t-sm sub,
.t-sm sup {
    font-size: 7px;
    line-height: 0;
    font-weight: normal;
}

.t-fx {
    font-size: 19px;
    color: #eef4fc;
    -webkit-text-stroke: 0.7px #3f78c4;
}

.a-red {
    width: 17px;
    font: 15px/15px "Liberation Sans", sans-serif;
    text-align: center;
    border-bottom: 4px solid #d9141b;
    color: #333;
}

.a-shade {
    width: 16px;
    background: #c9c9c9;
    font: 15px/16px "Liberation Sans", sans-serif;
    text-align: center;
    color: #444;
}

.a-circle {
    width: 16px;
    height: 16px;
    border: 1px solid #666;
    border-radius: 50%;
    font-size: 10px;
    line-height: 14px;
    text-align: center;
}

.svg-a {
    font: bold 8px "Liberation Sans", sans-serif;
    fill: #2b579a;
}

.svg-tiny {
    font: 6px "Liberation Sans", sans-serif;
    fill: #444;
}

.svg-cn {
    font: 9px "Noto Sans CJK SC", sans-serif;
    fill: #2b579a;
}

.svg-ab {
    font: 8px "Liberation Sans", sans-serif;
    fill: #333;
}

.svg-az {
    font: bold 8px "Liberation Sans", sans-serif;
    fill: #2b579a;
}

.svg-abc {
    font: 8px "Liberation Sans", sans-serif;
    fill: #444;
}

.svg-abc-blue {
    fill: #2b579a;
}

.svg-w {
    font: bold 8px "Liberation Sans", sans-serif;
    fill: #fff;
    text-anchor: middle;
}

.svg-ij {
    font: bold 6px "Liberation Sans", sans-serif;
    fill: #fff;
}

.svg-s {
    font: bold 13px "Liberation Sans", sans-serif;
    fill: #fff;
}

/* clipboard group */
.clip-body {
    display: flex;
    padding-top: 7px;
}

.paste {
    width: 50px;
    padding-left: 10px;
    display: flex;
    flex-direction: column;
    align-items: center;
    line-height: 14px;
    color: #333;
}

.paste-label {
    margin-top: -2px;
}

.clip-list {
    margin-top: -5px;
    padding-left: 5px;
}

.clip-item {
    height: 23.500px;
    display: flex;
    align-items: center;
    gap: 4px;
    white-space: nowrap;
}

.clip-off {
    color: #a5a5a5;
}

/* style gallery */
.gallery-wrap {
    display: flex;
    padding-top: 6px;
    padding-left: 9px;
}

.gallery {
    width: 516px;
    height: 60px;
    background: #fff;
    border: 1px solid #d9d9d9;
    border-right: none;
    display: flex;
    padding-left: 1px;
}

.style-item {
    width: 73px;
    flex: none;
    text-align: center;
}

.preview {
    height: 36px;
    margin: 0 6px;
    display: flex;
    align-items: center;
    justify-content: center;
    overflow: hidden;
    white-space: nowrap;
    color: #111;
}

.p-big {
    font: 29px "Liberation Sans", sans-serif;
    color: #000;
}

.p-big-serif {
    font: 40px "Liberation Serif", serif;
    color: #222;
    align-items: flex-start;
    line-height: 28px;
}

.p-chip {
    width: 61px;
    height: 16px;
    margin-top: 7px;
    overflow: hidden;
    background: #e2e2e2;
    font: 12.5px/16px "Liberation Sans", sans-serif;
    text-align: left;
}

.p-chip-blue {
    background: #e2e8f2;
    color: #1f3864;
}

.p-serif {
    width: 61px;
    margin-top: 6px;
    overflow: hidden;
    font: 14px "Liberation Serif", serif;
    text-align: center;
}

.style-name {
    font-size: 12.5px;
    color: #444;
    line-height: 20px;
}

.ret {
    font-style: normal;
    font-size: 9px;
    margin-right: 2px;
}

.scroller {
    width: 16px;
    height: 60px;
    margin-left: -1px;
    display: flex;
    flex-direction: column;
    border: 1px solid #c6c6c6;
    background: #fff;
}

.scroll-cell {
    flex: 1;
    display: flex;
    align-items: center;
    justify-content: center;
}

.scroll-cell + .scroll-cell {
    border-top: 1px solid #c6c6c6;
}

.scroll-off {
    background: #e9e9e9;
}

/* edit and save */
.edit-list {
    padding: 1px 0 0 14px;
}

.edit-item {
    height: 23.500px;
    display: flex;
    align-items: center;
    gap: 3px;
    white-space: nowrap;
}

.edit-item .chev {
    margin-left: 1px;
}

.save-body {
    padding-top: 12px;
    display: flex;
    flex-direction: column;
    align-items: center;
}

.save-text {
    margin-top: 9px;
    font-size: 12px;
    line-height: 16px;
    text-align: center;
}

.collapse-cell {
    flex: 1;
    display: flex;
    align-items: flex-end;
    justify-content: flex-end;
    padding: 0 14px 3px 0;
}

/* bilibili mark */
.watermark {
    position: absolute;
    left: 1318px;
    top: 84px;
    width: 230px;
    height: 52px;
    overflow: hidden;
    color: rgba(222, 232, 245, 0.8);
    white-space: nowrap;
    pointer-events: none;
}

.wm-cn {
    position: absolute;
    left: 0;
    top: 13px;
    font-size: 30px;
    font-weight: 700;
    line-height: 40px;
}

.wm-logo {
    position: absolute;
    left: 104px;
    top: -14px;
    font: bold 64px/70px "Liberation Sans", sans-serif;
    transform: scaleX(0.78);
    transform-origin: left top;
}

/* main area */
.main {
    height: 666px;
    display: flex;
    flex: none;
}

.nav {
    width: 357px;
    flex: none;
    background: #e6e6e6;
    border-right: 1px solid #c6c6c6;
    display: flex;
    flex-direction: column;
    padding-top: 10px;
}

.nav-head {
    height: 24px;
    display: flex;
    align-items: center;
    padding: 0 17px 0 13px;
}

.nav-title {
    font-size: 21px;
    color: #2c5a8c;
    flex: 1;
}

.nav-drop {
    border-left: 5px solid transparent;
    border-right: 5px solid transparent;
    border-top: 5px solid #666;
    margin-right: 32px;
}

.nav-search {
    height: 23px;
    margin: 20px 0 0 12px;
    width: 327px;
    background: #fff;
    border: 1px solid #b4b4b4;
    display: flex;
    align-items: center;
    padding-left: 2px;
    color: #666;
}

.nav-search-text {
    flex: 1;
}

.nav-tabs {
    height: 27px;
    margin: 17px 0 0 12px;
    display: flex;
    gap: 23px;
}

.nav-tab {
    width: 26px;
    height: 27px;
    line-height: 20px;
    text-align: center;
    white-space: nowrap;
    color: #444;
}

.nav-tab-on {
    color: #2b579a;
    border-bottom: 3px solid #2b579a;
}

.tree {
    margin-top: 4px;
    height: 518px;
    overflow: hidden;
}

.node {
    height: 22px;
    display: flex;
    align-items: center;
    padding-right: 29px;
    white-space: nowrap;
    color: #3a3a3a;
}

.node:first-child {
    margin-top: -7px;
}

.node span {
    flex: 1;
    line-height: 22px;
}

.tri {
    width: 8px;
    height: 8px;
    background: #444;
    clip-path: polygon(100% 0, 100% 100%, 0 100%);
    flex: none;
}

.lv1 .tri {
    margin-left: 16px;
}

.lv1 span {
    padding-left: 9px;
}

.lv2 .tri {
    margin-left: 32px;
}

.lv2 span {
    margin-left: 5px;
    padding-left: 5px;
}

.lv3 span {
    padding-left: 66px;
}

.node-on span {
    background: #c5d9f4;
}

/* document */
.doc {
    flex: 1;
    background: #e6e6e6;
    padding: 0 17px 18px 2px;
}

.page {
    position: relative;
    height: 648px;
    background: #fff;
    padding-left: 83px;
    padding-right: 77px;
    overflow: hidden;
}

.page-top {
    height: 3px;
    background: #ececec;
}

.h-section {
    margin: 54px 0 0;
    height: 44px;
    font: normal 38px/44px "Liberation Sans", "Noto Sans CJK SC", sans-serif;
    letter-spacing: 0.5px;
    color: #1a1a1a;
    white-space: nowrap;
}

.h-gap {
    display: inline-block;
    width: 38px;
}

.h-gap-sub {
    display: inline-block;
    width: 23px;
}

.diagram {
    display: block;
    margin: 58px 0 0 5px;
}

.flow-box rect {
    fill: #fff;
    stroke: #000;
    stroke-width: 3.500;
}

.flow-box .flow-on {
    fill: #d9d9d9;
}

.flow-line path {
    fill: none;
    stroke: #000;
    stroke-width: 3;
}

.flow-icon path {
    fill: none;
    stroke: #000;
    stroke-width: 2;
}

.flow-icon .flow-thick {
    stroke-width: 4;
}

.flow-text {
    font: 19px "Liberation Sans", "Noto Sans CJK SC", sans-serif;
    text-anchor: middle;
    fill: #111;
}

.caption {
    margin: 13px 0 0 -1px;
    height: 30px;
    font: 21.500px/30px "Liberation Serif", "Noto Sans CJK SC", serif;
    letter-spacing: 0.3px;
    color: #222;
    text-align: center;
}

.text-caret {
    display: inline-block;
    width: 1px;
    height: 22px;
    margin-right: 10px;
    background: #222;
    vertical-align: -4px;
}

.body-text {
    margin-top: 18px;
    font: 23.600px/41px "Liberation Serif", "Noto Sans CJK SC", serif;
    color: #1c1c1c;
}

.lat {
    font-size: 25px;
}

.line {
    display: block;
    height: 41px;
    white-space: nowrap;
}

.line-just {
    white-space: normal;
    text-align: justify;
    text-align-last: justify;
}

.line-first {
    padding-left: 50px;
}

.h-sub {
    margin: 47px 0 0 0;
    font: normal 28px/34px "Liberation Sans", "Noto Sans CJK SC", sans-serif;
    color: #222;
    white-space: nowrap;
}

.ibeam {
    position: absolute;
    left: 611px;
    top: 378px;
}

/* status bar */
.status {
    height: 21px;
    padding-bottom: 2px;
    background: #f3f3f3;
    border-top: 1px solid #d2d2d2;
    display: flex;
    align-items: center;
    font-size: 12.5px;
    color: #444;
    white-space: nowrap;
    flex: none;
}

.st-a {
    margin-left: 8px;
    width: 131px;
}

.st-b {
    width: 91px;
}

.st-c {
    width: 74px;
}

.st-d {
    display: flex;
    align-items: center;
    gap: 3px;
}

.st-views {
    margin-left: auto;
    margin-bottom: -2px;
    display: flex;
    height: 20px;
}

.view {
    width: 41px;
    display: flex;
    align-items: center;
    justify-content: center;
}

.view-on {
    background: #c6c6c6;
}

.zoom-bar {
    margin-left: 4px;
}

.st-zoom {
    margin-left: 7px;
    margin-right: 8px;
    font-size: 13px;
}

/* taskbar */
.taskbar {
    height: 31px;
    background: linear-gradient(90deg, #bfe3dc, #d6ead0 13%, #c6e7e2 26%, #c2e5e3);
    display: flex;
    align-items: center;
    flex: none;
}

.task {
    width: 38px;
    height: 31px;
    flex: none;
    display: flex;
    align-items: center;
    justify-content: center;
    padding-bottom: 2px;
}

.task:first-child {
    width: 36px;
}

.task-on {
    background: rgba(255, 255, 255, 0.45);
    border-bottom: 2px solid #0b6fc2;
}

.task-run {
    border-bottom: 2px solid #0b6fc2;
    margin-left: 3px;
    width: 30px;
}

.tray {
    margin-left: auto;
    display: flex;
    align-items: center;
    color: #222;
    padding-right: 24px;
}

.battery {
    width: 34px;
    height: 18px;
    margin-left: 2px;
    border: 1px solid #666;
    border-radius: 3px;
    background: #eaf3ee;
    padding: 1px 4px 1px 1px;
}

.battery-fill {
    display: block;
    height: 14px;
    background: #13804f;
    color: #fff;
    font: 11px/14px "Liberation Sans", sans-serif;
    text-align: center;
}

.tray-caret {
    margin-left: 9px;
}

.tray-mic {
    margin-left: 10px;
}

.tray-bat {
    margin-left: 8px;
}

.tray-wifi {
    margin-left: 10px;
}

.tray-ime {
    margin-left: 9px;
    font-size: 15px;
    color: #555;
}

.tray-sogou {
    margin-left: 14px;
}

.tray-clock {
    margin-left: 21px;
    width: 37px;
    font-size: 13px;
}

.tray-note {
    margin-left: 13px;
}

.black-foot {
    height: 9px;
    background: #000;
    flex: none;
}
```
